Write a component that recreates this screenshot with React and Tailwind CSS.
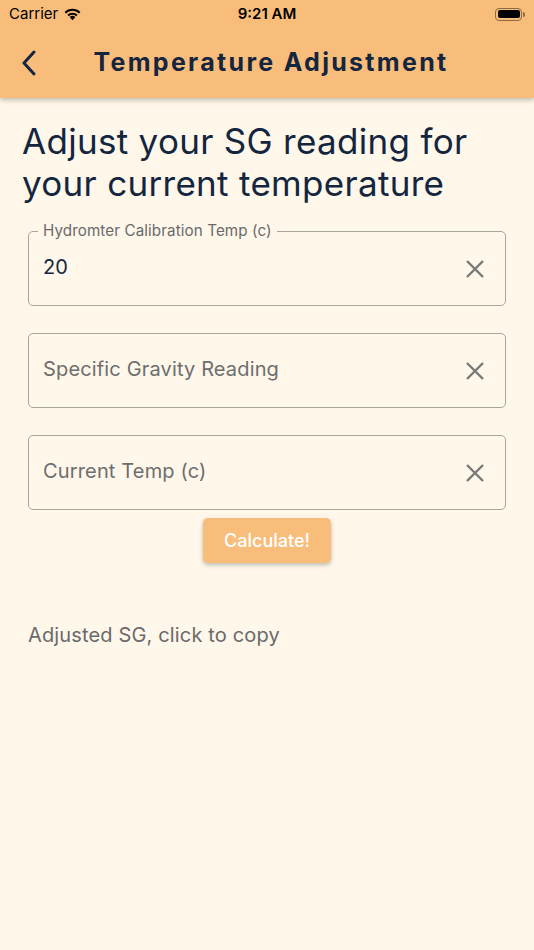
import React from 'react';

function StatusBar() {
  return (
    <div className="h-[28px] flex items-center justify-between px-[9px] text-[15px] text-black relative">
      <div className="flex items-center gap-[5px]">
        <span>Carrier</span>
        <svg width="19" height="14" viewBox="0 0 19 14">
          <path d="M9.5 13.2 L6.6 10.1 A4.2 4.2 0 0 1 12.4 10.1 Z" fill="#000" />
          <path d="M4.4 7.8 A7.4 7.4 0 0 1 14.6 7.8 L13.2 9.3 A5.4 5.4 0 0 0 5.8 9.3 Z" fill="#000" />
          <path d="M1.6 4.9 A11.4 11.4 0 0 1 17.4 4.9 L16 6.4 A9.4 9.4 0 0 0 3 6.4 Z" fill="#000" />
        </svg>
      </div>
      <span className="absolute left-1/2 -translate-x-1/2 font-semibold">9:21 AM</span>
      <div className="flex items-center">
        <div className="w-[27px] h-[13px] rounded-[4px] border border-[#8a6a40] p-[1.5px]">
          <div className="w-full h-full bg-black rounded-[2px]" />
        </div>
        <div className="w-[2px] h-[5px] bg-[#8a6a40] rounded-r-sm ml-[1px]" />
      </div>
    </div>
  );
}

function Field({ label, value, placeholder }) {
  return (
    <div className="relative h-[75px] border border-[#a9a59c] rounded-[5px] flex items-center pl-[14px] pr-[20px] pb-[3px]">
      {label && (
        <span className="absolute -top-[10px] left-[9px] px-[5px] bg-[#fef7ea] text-[15.2px] text-[#6a6a6a] leading-[18px] tracking-[0.1px]">
          {label}
        </span>
      )}
      <span className={value ? 'flex-1 text-[20px] text-[#14263f] tracking-[0.15px]' : 'flex-1 text-[20px] text-[#6e6e6e] tracking-[0.15px]'}>
        {value || placeholder}
      </span>
      <svg className="mt-[3px]" width="20" height="20" viewBox="0 0 20 20">
        <path d="M2 2 L18 18 M18 2 L2 18" stroke="#787878" strokeWidth="2.4" />
      </svg>
    </div>
  );
}

function App() {
  return (
    <div className="w-[534px] h-[950px] bg-[#fef7ea] overflow-hidden" style={{ fontFamily: 'Inter, "Noto Sans", sans-serif' }}>
      <div className="bg-[#f9bd7b] shadow-[0_2px_5px_rgba(0,0,0,0.25)] relative z-10">
        <StatusBar />
        <div className="h-[70px] flex items-center relative">
          <svg className="absolute left-[21px]" width="16" height="26" viewBox="0 0 16 26">
            <path d="M13 2 L3 13 L13 24" stroke="#14263f" strokeWidth="3" fill="none" strokeLinecap="round" strokeLinejoin="round" />
          </svg>
          <h1 className="w-full text-center pl-[8px] text-[25px] font-bold tracking-[2.3px] text-[#14263f]">
            Temperature Adjustment
          </h1>
        </div>
      </div>
      <div className="px-[22px] pt-[22px]">
        <h2 className="text-[35px] leading-[42px] text-[#14263f] tracking-[0.3px]">
          Adjust your SG reading for your current temperature
        </h2>
      </div>
      <div className="px-[28px] pt-[27px] flex flex-col gap-[27px]">
        <Field label="Hydromter Calibration Temp (c)" value="20" />
        <Field placeholder="Specific Gravity Reading" />
        <Field placeholder="Current Temp (c)" />
      </div>
      <div className="flex justify-center pt-[8px]">
        <button className="w-[128px] h-[45px] bg-[#f9bd7b] text-white text-[18px] font-medium rounded-[5px] shadow-[0_2px_4px_rgba(0,0,0,0.25)]">
          Calculate!
        </button>
      </div>
      <p className="px-[28px] pt-[57px] text-[20px] text-[#6a6a6a] tracking-[0.15px]">Adjusted SG, click to copy</p>
    </div>
  );
}

export default App;
